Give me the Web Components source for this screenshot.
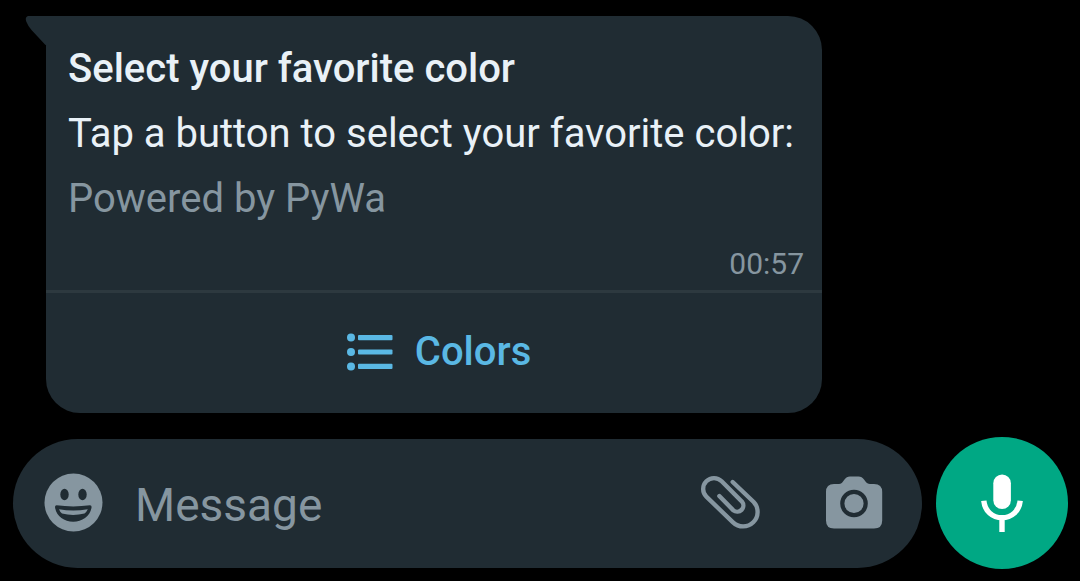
<!DOCTYPE html>
<html lang="en">
<head>
<meta charset="utf-8">
<meta name="viewport" content="width=device-width, initial-scale=1">
<title>Chat</title>
<style>
  body { margin: 0; background: #000; color: #e9f1f7; font-family: Roboto, sans-serif; }
</style>
</head>
<body>
<chat-screen>
  <chat-bubble>
    <span slot="title">Select your favorite color</span>
    <span slot="body">Tap a button to select your favorite color:</span>
    <span slot="footer">Powered by PyWa</span>
    <time slot="time" datetime="00:57">00:57</time>
    <list-button slot="action">Colors</list-button>
  </chat-bubble>
  <message-composer slot="composer"></message-composer>
</chat-screen>

<script>
  class BaseElement extends HTMLElement {
    constructor() {
      super();
      this.attachShadow({ mode: 'open' }).innerHTML = this.constructor.markup;
    }
  }

  class ChatScreen extends BaseElement {
    static markup = `
      <style>
        :host { display: block; }
        main { padding: 16px 46px 0; }
        footer { padding: 24px 12px 12px 13px; }
      </style>
      <main><slot></slot></main>
      <footer><slot name="composer"></slot></footer>`;
  }

  class ChatBubble extends BaseElement {
    static markup = `
      <style>
        :host { display: block; position: relative; width: fit-content; max-width: 100%;
                background: #202c33; border-radius: 0 34px 34px 34px; }
        .tail { position: absolute; top: 0; left: -21px; width: 22px; height: 32px; fill: #202c33; }
        .text { padding: 20px 28px 0 22px; font-size: 40px; line-height: 65px; }
        h2, p { margin: 0; font-size: inherit; font-weight: 400; }
        h2 { font-weight: 500; }
        .muted { color: #8696a0; }
        .time { padding: 15px 18px 8px; text-align: right; font-size: 30px; line-height: 36px; color: #8696a0; }
        .action { border-top: 3px solid #2d393f; }
      </style>
      <svg class="tail" viewBox="0 0 22 32" aria-hidden="true">
        <path d="M22 0H4C1 0 0 2.500 1.500 6Q3 10 6.500 14L20 28.500L22 30Z"/>
      </svg>
      <div class="text">
        <h2><slot name="title"></slot></h2>
        <p><slot name="body"></slot></p>
        <p class="muted"><slot name="footer"></slot></p>
      </div>
      <div class="time"><slot name="time"></slot></div>
      <div class="action"><slot name="action"></slot></div>`;
  }

  class ListButton extends BaseElement {
    static markup = `
      <style>
        :host { display: block; }
        button { display: flex; align-items: center; justify-content: center; gap: 22px; width: 100%;
                 height: 120px; padding: 0 0 2px 10px; border: 0; background: none; color: #5ab8e4;
                 font: 500 40px/48px Roboto, sans-serif; cursor: pointer; }
        svg { width: 46px; height: 38px; fill: currentColor; }
      </style>
      <button type="button">
        <svg viewBox="0 0 46 38" aria-hidden="true">
          <circle cx="4" cy="4.5" r="4"/><circle cx="4" cy="19" r="4"/><circle cx="4" cy="33.5" r="4"/>
          <rect x="11" y="2" width="34.5" height="5.2" rx="1"/>
          <rect x="11" y="16.4" width="34.5" height="5.2" rx="1"/>
          <rect x="11" y="30.8" width="34.5" height="5.2" rx="1"/>
        </svg>
        <slot></slot>
      </button>`;
  }

  class MessageComposer extends BaseElement {
    static markup = `
      <style>
        :host { display: block; }
        form { display: flex; align-items: center; gap: 14px; }
        .field { flex: 1; min-width: 0; display: flex; align-items: center; height: 129px;
                 box-sizing: border-box; padding: 0 38px 0 30px; border-radius: 65px; background: #202c33; }
        button { display: flex; align-items: center; justify-content: center; flex: none; padding: 0;
                 border: 0; background: none; color: #8696a0; cursor: pointer; }
        input { flex: 1; min-width: 0; height: 64px; margin: 0 0 0 32px; padding: 4px 0 0; border: 0; outline: 0;
                background: none; color: #e9f1f7; font: 400 46px/60px Roboto, sans-serif; }
        input::placeholder { color: #8696a0; opacity: 1; }
        svg { width: 60px; height: 60px; }
        .camera { margin-left: 64px; }
        .mic { width: 132px; height: 132px; border-radius: 50%; background: #00a884; color: #fff; }
      </style>
      <form>
        <div class="field">
          <button type="button" aria-label="Emoji">
            <svg viewBox="0 0 60 60" aria-hidden="true">
              <circle cx="30.5" cy="29.5" r="29" fill="currentColor"/>
              <g fill="#202c33">
                <ellipse cx="21.5" cy="21.5" rx="4.2" ry="5.8"/>
                <ellipse cx="39.5" cy="21.5" rx="4.2" ry="5.8"/>
                <path d="M13.5 32.3Q12 32.3 12 34C13 43 21 48.7 30.2 48.7S47.5 43 48.6 34Q48.6 32.3 47 32.3Q30.2 34.5 13.5 32.3Z"/>
              </g>
              <path d="M16 36.3Q30 38.700 44.8 36.3Q43.6 39 41.5 40.6Q30 43.2 19 40.6Q17 39 16 36.3Z" fill="currentColor"/>
            </svg>
          </button>
          <input type="text" aria-label="Message" placeholder="Message">
          <button type="button" aria-label="Attach">
            <svg viewBox="30 24 180 180" fill="none" stroke="currentColor" stroke-width="13" stroke-linecap="round" aria-hidden="true">
              <path d="M128 51L191 111A43.5 43.5 0 0 1 129 172L49 95A32.5 32.5 0 0 1 95 49L156 110A18.5 18.5 0 0 1 130 136L88 93"/>
            </svg>
          </button>
          <button class="camera" type="button" aria-label="Camera">
            <svg viewBox="0 0 60 60" aria-hidden="true">
              <path fill="currentColor" d="M10 11H15C17 11 18 10 19 8.500L20.500 6.500C22 4.500 23.500 3.500 26 3.500H34.500C37 3.500 38.500 4.500 40 6.500L41.500 8.500C42.500 10 44 11 46 11H50Q58.200 11 58.200 19V47.500Q58.200 55.500 50 55.500H10Q2 55.500 2 47.500V19Q2 11 10 11Z"/>
              <circle cx="30" cy="30.500" r="11.700" fill="none" stroke="#202c33" stroke-width="4.200"/>
            </svg>
          </button>
        </div>
        <button class="mic" type="button" aria-label="Record voice message">
          <svg viewBox="0 0 60 60" aria-hidden="true">
            <rect x="21.300" y="1.500" width="17.600" height="34.500" rx="8.800" fill="currentColor"/>
            <path d="M11.800 27.800C12.800 38 20.500 44.800 30 44.800S47.200 38 48.200 27.800M30 44.800V59" fill="none" stroke="currentColor" stroke-width="5.400"/>
          </svg>
        </button>
      </form>`;
  }

  customElements.define('chat-screen', ChatScreen);
  customElements.define('chat-bubble', ChatBubble);
  customElements.define('list-button', ListButton);
  customElements.define('message-composer', MessageComposer);
</script>
</body>
</html>
